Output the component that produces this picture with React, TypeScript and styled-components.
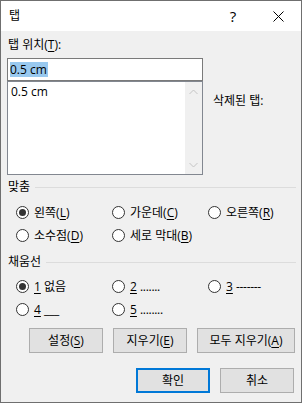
import { FC, ReactNode } from 'react';
import styled, { createGlobalStyle } from 'styled-components';

const GlobalStyle = createGlobalStyle`
  html, body {
    margin: 0;
    padding: 0;
    background: #ffffff;
  }
  body {
    font-family: "Open Sans", "Noto Sans CJK KR", sans-serif;
    font-size: 12px;
    color: #000;
  }
`;

type RadioProps = {
  checked?: boolean;
  children: ReactNode;
};

const Radio: FC<RadioProps> = ({ checked = false, children }) => (
  <SRadio>
    <SCircle $checked={checked} />
    <SRadioText>{children}</SRadioText>
  </SRadio>
);

const Chevron: FC<{ down?: boolean }> = ({ down = false }) => (
  <svg width="9" height="6" viewBox="0 0 9 6">
    <polyline
      points={down ? '0.5,1 4.5,5 8.5,1' : '0.5,5 4.5,1 8.5,5'}
      fill="none"
      stroke="#c4c4c4"
      strokeWidth="1"
    />
  </svg>
);

export default function App() {
  return (
    <>
      <GlobalStyle />
      <SWindow>
        <STitleBar>
          <STitle>탭</STitle>
          <SCaptionButtons>
            <SHelp>?</SHelp>
            <SClose>
              <svg width="11" height="11" viewBox="0 0 11 11">
                <path d="M0.5 0.5 L10.5 10.5 M10.5 0.5 L0.5 10.5" stroke="#000" strokeWidth="1" />
              </svg>
            </SClose>
          </SCaptionButtons>
        </STitleBar>

        <SContent>
          <SLabel>
            탭 위치(<SU>T</SU>):
          </SLabel>
          <STop>
            <SLeftCol>
              <SInput>
                <SSelected>0.5 cm</SSelected>
              </SInput>
              <SList>
                <SListItems>
                  <SListItem>0.5 cm</SListItem>
                </SListItems>
                <SScrollbar>
                  <Chevron />
                  <Chevron down />
                </SScrollbar>
              </SList>
            </SLeftCol>
            <SDeleted>삭제된 탭:</SDeleted>
          </STop>

          <SGroupHeader $top={5}>
            <span>맞춤</span>
            <SRule />
          </SGroupHeader>
          <SRadioGrid $top={7}>
            <Radio checked>
              왼쪽(<SU>L</SU>)
            </Radio>
            <Radio>
              가운데(<SU>C</SU>)
            </Radio>
            <Radio>
              오른쪽(<SU>R</SU>)
            </Radio>
            <Radio>
              소수점(<SU>D</SU>)
            </Radio>
            <Radio>
              세로 막대(<SU>B</SU>)
            </Radio>
          </SRadioGrid>

          <SGroupHeader $top={8}>
            <span>채움선</span>
            <SRule />
          </SGroupHeader>
          <SRadioGrid $top={6}>
            <Radio checked>
              <SU>1</SU> 없음
            </Radio>
            <Radio>
              <SU>2</SU> <SLeader>.......</SLeader>
            </Radio>
            <Radio>
              <SU>3</SU> <SLeader>-------</SLeader>
            </Radio>
            <Radio>
              <SU>4</SU> <SLeader>___</SLeader>
            </Radio>
            <Radio>
              <SU>5</SU> <SLeader>........</SLeader>
            </Radio>
          </SRadioGrid>

          <SButtonRow $top={7} $right={1}>
            <SButton $width={74}>
              설정(<SU>S</SU>)
            </SButton>
            <SButton $width={74}>
              지우기(<SU>E</SU>)
            </SButton>
            <SButton $width={98}>
              모두 지우기(<SU>A</SU>)
            </SButton>
          </SButtonRow>
          <SButtonRow $top={15} $right={2}>
            <SButton $width={74} $default>
              확인
            </SButton>
            <SButton $width={74}>취소</SButton>
          </SButtonRow>
        </SContent>
      </SWindow>
    </>
  );
}

const SWindow = styled.div`
  width: 302px;
  height: 403px;
  box-sizing: border-box;
  border: 1px solid #6f6f6f;
  background: #f0f0f0;
  display: flex;
  flex-direction: column;
`;

const STitleBar = styled.div`
  height: 30px;
  background: #ffffff;
  display: flex;
  align-items: center;
  padding-left: 8px;
  flex: none;
`;

const STitle = styled.span`
  font-size: 12px;
  line-height: 14px;
`;

const SCaptionButtons = styled.div`
  margin-left: auto;
  display: flex;
  height: 100%;
`;

const SHelp = styled.div`
  width: 44px;
  display: flex;
  align-items: center;
  justify-content: center;
  font-size: 15px;
  padding-left: 2px;
`;

const SClose = styled.div`
  width: 46px;
  display: flex;
  align-items: center;
  justify-content: center;
  padding-top: 1px;
`;

const SContent = styled.div`
  padding: 7px 5px 0 6px;
  display: flex;
  flex-direction: column;
`;

const SU = styled.span`
  text-decoration: underline;
  text-underline-offset: 2px;
`;

const SLabel = styled.div`
  line-height: 14px;
  height: 14px;
  margin-bottom: 6px;
  padding-left: 1px;
`;

const STop = styled.div`
  display: flex;
  align-items: flex-start;
`;

const SLeftCol = styled.div`
  width: 196px;
  display: flex;
  flex-direction: column;
`;

const SInput = styled.div`
  height: 23px;
  box-sizing: border-box;
  border: 1px solid #7a7a7a;
  background: #ffffff;
  padding: 2px 2px;
  display: flex;
  align-items: flex-start;
`;

const SSelected = styled.span`
  background: #99c9ef;
  line-height: 15px;
  height: 15px;
  padding-right: 1px;
  margin-top: 1px;
`;

const SList = styled.div`
  height: 94px;
  box-sizing: border-box;
  border: 1px solid #828790;
  background: #ffffff;
  display: flex;
`;

const SListItems = styled.div`
  flex: 1;
  padding: 2px 3px;
`;

const SListItem = styled.div`
  line-height: 15px;
`;

const SScrollbar = styled.div`
  width: 17px;
  background: #f0f0f0;
  display: flex;
  flex-direction: column;
  align-items: center;
  justify-content: space-between;
  padding: 7px 0 6px;
  box-sizing: border-box;
`;

const SDeleted = styled.div`
  margin-left: 10px;
  padding-top: 36px;
  line-height: 14px;
`;

const SGroupHeader = styled.div<{ $top: number }>`
  margin-top: ${(p) => p.$top}px;
  height: 14px;
  line-height: 14px;
  display: flex;
  align-items: center;
  padding-left: 1px;
`;

const SRule = styled.div`
  flex: 1;
  height: 1px;
  background: #dcdcdc;
  margin-left: 5px;
`;

const SRadioGrid = styled.div<{ $top: number }>`
  margin-top: ${(p) => p.$top}px;
  padding-left: 9px;
  display: grid;
  grid-template-columns: 96px 96px 1fr;
  grid-auto-rows: 23px;
`;

const SRadio = styled.div`
  display: flex;
  align-items: center;
  gap: 5px;
`;

const SCircle = styled.span<{ $checked: boolean }>`
  width: 13px;
  height: 13px;
  box-sizing: border-box;
  border: 1px solid #333333;
  border-radius: 50%;
  background: #ffffff;
  display: inline-flex;
  align-items: center;
  justify-content: center;
  flex: none;

  &::after {
    content: '';
    width: 7px;
    height: 7px;
    border-radius: 50%;
    background: #333333;
    display: ${(p) => (p.$checked ? 'block' : 'none')};
  }
`;

const SRadioText = styled.span`
  line-height: 14px;
  white-space: pre;
`;

const SLeader = styled.span`
  letter-spacing: -0.3px;
`;

const SButtonRow = styled.div<{ $top: number; $right: number }>`
  margin-top: ${(p) => p.$top}px;
  padding-right: ${(p) => p.$right}px;
  display: flex;
  justify-content: flex-end;
  gap: 10px;
`;

const SButton = styled.div<{ $width: number; $default?: boolean }>`
  width: ${(p) => p.$width}px;
  height: 25px;
  box-sizing: border-box;
  background: #e1e1e1;
  border: ${(p) => (p.$default ? '2px solid #0078d7' : '1px solid #adadad')};
  display: flex;
  align-items: center;
  justify-content: center;
  line-height: 14px;
`;
